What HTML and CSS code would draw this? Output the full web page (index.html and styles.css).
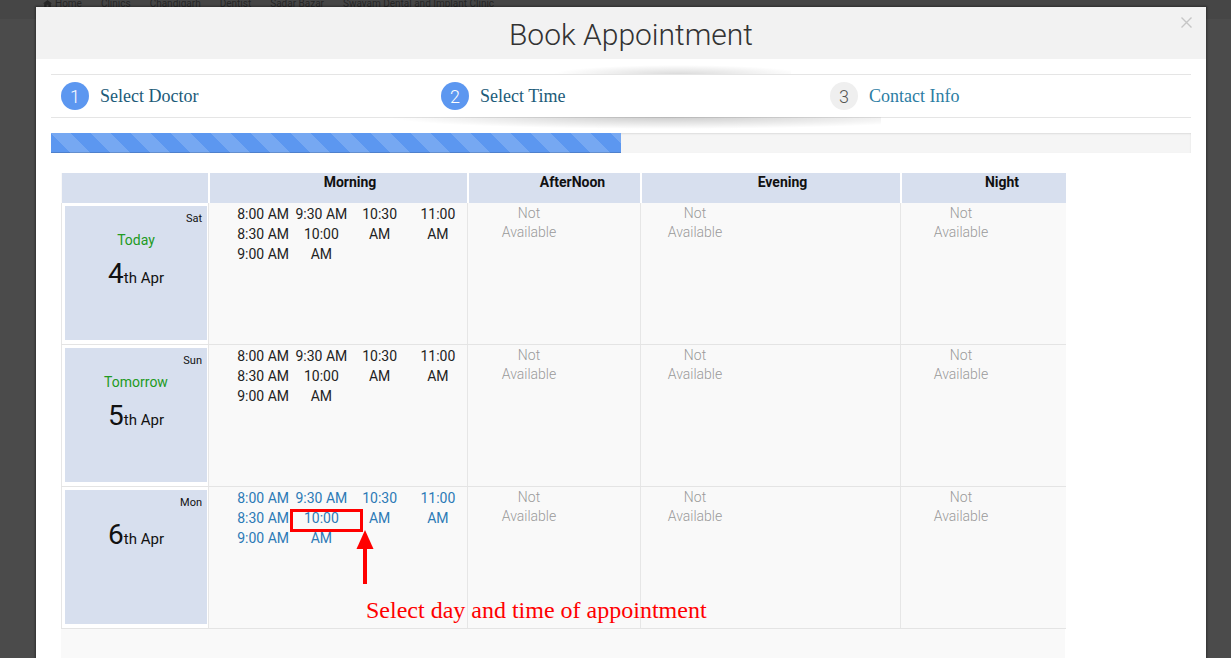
FILE: index.html
```html
<!DOCTYPE html>
<html lang="en">
<head>
    <meta charset="UTF-8">
    <title>Book Appointment</title>
    <link rel="stylesheet" href="styles.css">
</head>
<body>
    <div class="crumbs">
        <span class="crumb"><svg class="home-icon" width="9" height="7" viewBox="0 0 9 7"><path d="M4.5 0 L9 3.6 H7.8 V7 H5.4 V4.8 H3.6 V7 H1.2 V3.6 H0 Z" fill="#262626"/></svg>Home</span>
        <span class="crumb">Clinics</span>
        <span class="crumb">Chandigarh</span>
        <span class="crumb">Dentist</span>
        <span class="crumb">Sadar Bazar</span>
        <span class="crumb">Swayam Dental and Implant Clinic</span>
    </div>

    <div class="modal">
        <div class="modal-header">
            <h4 class="modal-title">Book Appointment</h4>
            <button class="close" type="button"><svg width="11" height="11" viewBox="0 0 11 11"><path d="M0.5 0.5 L10.5 10.5 M10.5 0.5 L0.5 10.5" stroke="#c6c6c6" stroke-width="1.4"/></svg></button>
        </div>

        <div class="modal-body">
            <div class="steps">
                <div class="step"><span class="step-num">1</span><span class="step-label">Select Doctor</span></div>
                <div class="step"><span class="step-num">2</span><span class="step-label">Select Time</span></div>
                <div class="step step-todo"><span class="step-num">3</span><span class="step-label">Contact Info</span></div>
            </div>

            <div class="progress">
                <div class="progress-bar" style="width: 50%"></div>
            </div>

            <div class="slots-wrap">
                <table class="slots">
                    <colgroup>
                        <col style="width: 147px">
                        <col style="width: 259px">
                        <col style="width: 173px">
                        <col style="width: 260px">
                        <col style="width: 165px">
                    </colgroup>
                    <thead>
                        <tr>
                            <th></th>
                            <th class="th-wide">Morning</th>
                            <th class="th-narrow">AfterNoon</th>
                            <th class="th-wide">Evening</th>
                            <th class="th-narrow">Night</th>
                        </tr>
                    </thead>
                    <tbody>
                        <tr>
                            <td class="day">
                                <div class="day-box">
                                    <div class="dow">Sat</div>
                                    <div class="rel">Today</div>
                                    <div class="date"><span class="num">4</span>th Apr</div>
                                </div>
                            </td>
                            <td class="period">
                                <div class="times">
                                    <ul><li>8:00 AM</li><li>8:30 AM</li><li>9:00 AM</li></ul>
                                    <ul><li>9:30 AM</li><li>10:00 AM</li></ul>
                                    <ul><li>10:30 AM</li></ul>
                                    <ul><li>11:00 AM</li></ul>
                                </div>
                            </td>
                            <td class="period"><div class="na na-noon">Not<br>Available</div></td>
                            <td class="period"><div class="na na-eve">Not<br>Available</div></td>
                            <td class="period"><div class="na na-night">Not<br>Available</div></td>
                        </tr>
                        <tr>
                            <td class="day">
                                <div class="day-box">
                                    <div class="dow">Sun</div>
                                    <div class="rel">Tomorrow</div>
                                    <div class="date"><span class="num">5</span>th Apr</div>
                                </div>
                            </td>
                            <td class="period">
                                <div class="times">
                                    <ul><li>8:00 AM</li><li>8:30 AM</li><li>9:00 AM</li></ul>
                                    <ul><li>9:30 AM</li><li>10:00 AM</li></ul>
                                    <ul><li>10:30 AM</li></ul>
                                    <ul><li>11:00 AM</li></ul>
                                </div>
                            </td>
                            <td class="period"><div class="na na-noon">Not<br>Available</div></td>
                            <td class="period"><div class="na na-eve">Not<br>Available</div></td>
                            <td class="period"><div class="na na-night">Not<br>Available</div></td>
                        </tr>
                        <tr>
                            <td class="day">
                                <div class="day-box">
                                    <div class="dow">Mon</div>
                                    <div class="date"><span class="num">6</span>th Apr</div>
                                </div>
                            </td>
                            <td class="period">
                                <div class="times times-open">
                                    <ul><li>8:00 AM</li><li>8:30 AM</li><li>9:00 AM</li></ul>
                                    <ul><li>9:30 AM</li><li>10:00 AM</li></ul>
                                    <ul><li>10:30 AM</li></ul>
                                    <ul><li>11:00 AM</li></ul>
                                </div>
                            </td>
                            <td class="period"><div class="na na-noon">Not<br>Available</div></td>
                            <td class="period"><div class="na na-eve">Not<br>Available</div></td>
                            <td class="period"><div class="na na-night">Not<br>Available</div></td>
                        </tr>
                    </tbody>
                </table>

                <!-- help overlay pointing at a slot -->
                <div class="note-box"></div>
                <svg class="note-arrow" width="18" height="54" viewBox="0 0 18 54">
                    <path d="M9 0 L17.5 19 L0.5 19 Z" fill="#f00"/>
                    <rect x="7" y="18" width="4" height="36" fill="#f00"/>
                </svg>
                <div class="note-text">Select day and time of appointment</div>
            </div>
        </div>
    </div>
</body>
</html>
```

FILE: styles.css
```css
* {
    box-sizing: border-box;
}
body {
    margin: 0;
    height: 658px;
    overflow: hidden;
    background: #4b4b4b;
    font-family: Roboto, "Liberation Sans", sans-serif;
}
.crumbs {
    display: flex;
    gap: 19px;
    height: 19px;
    padding-left: 43px;
    background: #464646;
    font-size: 10px;
    line-height: 7px;
    color: #262626;
}
.home-icon {
    margin-right: 3px;
}
.modal {
    position: absolute;
    top: 7px;
    left: 36px;
    width: 1170px;
    height: 700px;
    background: #fff;
    box-shadow: 0 0 2px 1px rgba(0, 0, 0, .35);
}
.modal-header {
    position: relative;
    height: 52px;
    padding: 2px 15px 0 35px;
    background: #f2f2f2;
    text-align: center;
}
.modal-title {
    margin: 0;
    font-size: 30px;
    font-weight: 300;
    line-height: 51px;
    color: #333;
}
.close {
    position: absolute;
    top: 10px;
    right: 14px;
    padding: 0;
    border: 0;
    background: none;
    line-height: 0;
}
.modal-body {
    padding: 15px;
}
.steps {
    position: relative;
    display: grid;
    grid-template-columns: 380px 389px 1fr;
    height: 44px;
    padding-left: 10px;
    border-top: 1px solid #e5e5e5;
    border-bottom: 1px solid #e5e5e5;
}
.steps::before {
    content: "";
    position: absolute;
    left: 490px;
    top: -10px;
    width: 250px;
    height: 9px;
    background: radial-gradient(ellipse 50% 100% at 55% 100%, rgba(0, 0, 0, .14), rgba(0, 0, 0, 0));
}
.steps::after {
    content: "";
    position: absolute;
    left: 270px;
    top: 100%;
    width: 560px;
    height: 12px;
    background: radial-gradient(ellipse 50% 100% at 62% 0, rgba(0, 0, 0, .2), rgba(0, 0, 0, 0));
}
.step {
    display: flex;
    align-items: center;
}
.step-num {
    display: flex;
    align-items: center;
    justify-content: center;
    width: 28px;
    height: 28px;
    border-radius: 50%;
    background: #5c97f0;
    color: #fff;
    font-size: 18px;
    font-weight: 300;
}
.step-label {
    margin-left: 11px;
    font-family: "Liberation Serif", serif;
    font-size: 18px;
    color: #1c5b79;
}
.step-todo .step-num {
    background: #efefef;
    color: #555;
}
.step-todo .step-label {
    color: #2b7da3;
}
.progress {
    height: 20px;
    margin-top: 15px;
    background: #f5f5f5;
    box-shadow: inset 0 1px 2px rgba(0, 0, 0, .1);
}
.progress-bar {
    height: 100%;
    background-color: #5c97f0;
    background-image: linear-gradient(45deg, rgba(255, 255, 255, .16) 25%, transparent 25%, transparent 50%, rgba(255, 255, 255, .16) 50%, rgba(255, 255, 255, .16) 75%, transparent 75%, transparent);
    background-size: 40px 40px;
    box-shadow: inset 0 -1px 0 rgba(0, 0, 0, .15);
}
.slots-wrap {
    position: relative;
    width: 1004px;
    margin: 20px 0 0 10px;
    padding-bottom: 60px;
    background: #f9f9f9;
}
.slots {
    width: 100%;
    border-collapse: collapse;
    table-layout: fixed;
}
.slots th {
    height: 30px;
    padding: 0 0 12px;
    vertical-align: top;
    background: #d7dfee;
    border-right: 2px solid #fff;
    font-size: 14px;
    line-height: 18px;
    color: #111;
}
.slots th.th-wide {
    padding-left: 24px;
}
.slots th.th-narrow {
    padding-left: 37px;
}
.slots th:last-child {
    border-right: 0;
}
.slots td {
    padding: 0;
    vertical-align: top;
    border-right: 1px solid #e6e6e6;
    border-bottom: 1px solid #e4e4e4;
}
.slots td:last-child {
    border-right: 0;
}
.day {
    background: #fff;
    border-left: 1px solid #e6e6e6;
}
.slots td.day {
    padding: 3px 1px 4px 3px;
}
.day-box {
    height: 134px;
    padding: 5px 5px 0;
    background: #d7dfee;
    text-align: center;
    color: #111;
}
.dow {
    font-size: 11px;
    line-height: 16px;
    text-align: right;
}
.rel {
    margin-top: 3px;
    font-size: 14px;
    line-height: 20px;
    color: #229a22;
}
.date {
    margin-top: 8px;
    font-size: 15px;
    line-height: 32px;
}
.date .num {
    font-size: 28px;
}
.period {
    background: #f9f9f9;
}
.slots td.period {
    padding-top: 1px;
}
.times {
    display: flex;
    padding-left: 25px;
}
.times ul {
    width: 59px;
    margin: 0;
    padding: 0 2px;
    list-style: none;
    text-align: center;
    font-size: 14px;
    line-height: 20px;
    color: #222;
}
.times-open ul {
    color: #2c7ab6;
}
.na {
    width: 80px;
    text-align: center;
    font-size: 14px;
    font-weight: 300;
    line-height: 19px;
    color: #999;
}
.na-noon {
    margin-left: 21px;
}
.na-eve {
    margin-left: 14px;
}
.na-night {
    margin-left: 20px;
}
.note-box {
    position: absolute;
    left: 229px;
    top: 336px;
    width: 73px;
    height: 23px;
    border: 3px solid #f00;
}
.note-arrow {
    position: absolute;
    left: 295px;
    top: 357px;
}
.note-text {
    position: absolute;
    left: 305px;
    top: 423px;
    font-family: "Liberation Serif", serif;
    font-size: 24px;
    line-height: 28px;
    color: #f00;
    white-space: nowrap;
}
```
